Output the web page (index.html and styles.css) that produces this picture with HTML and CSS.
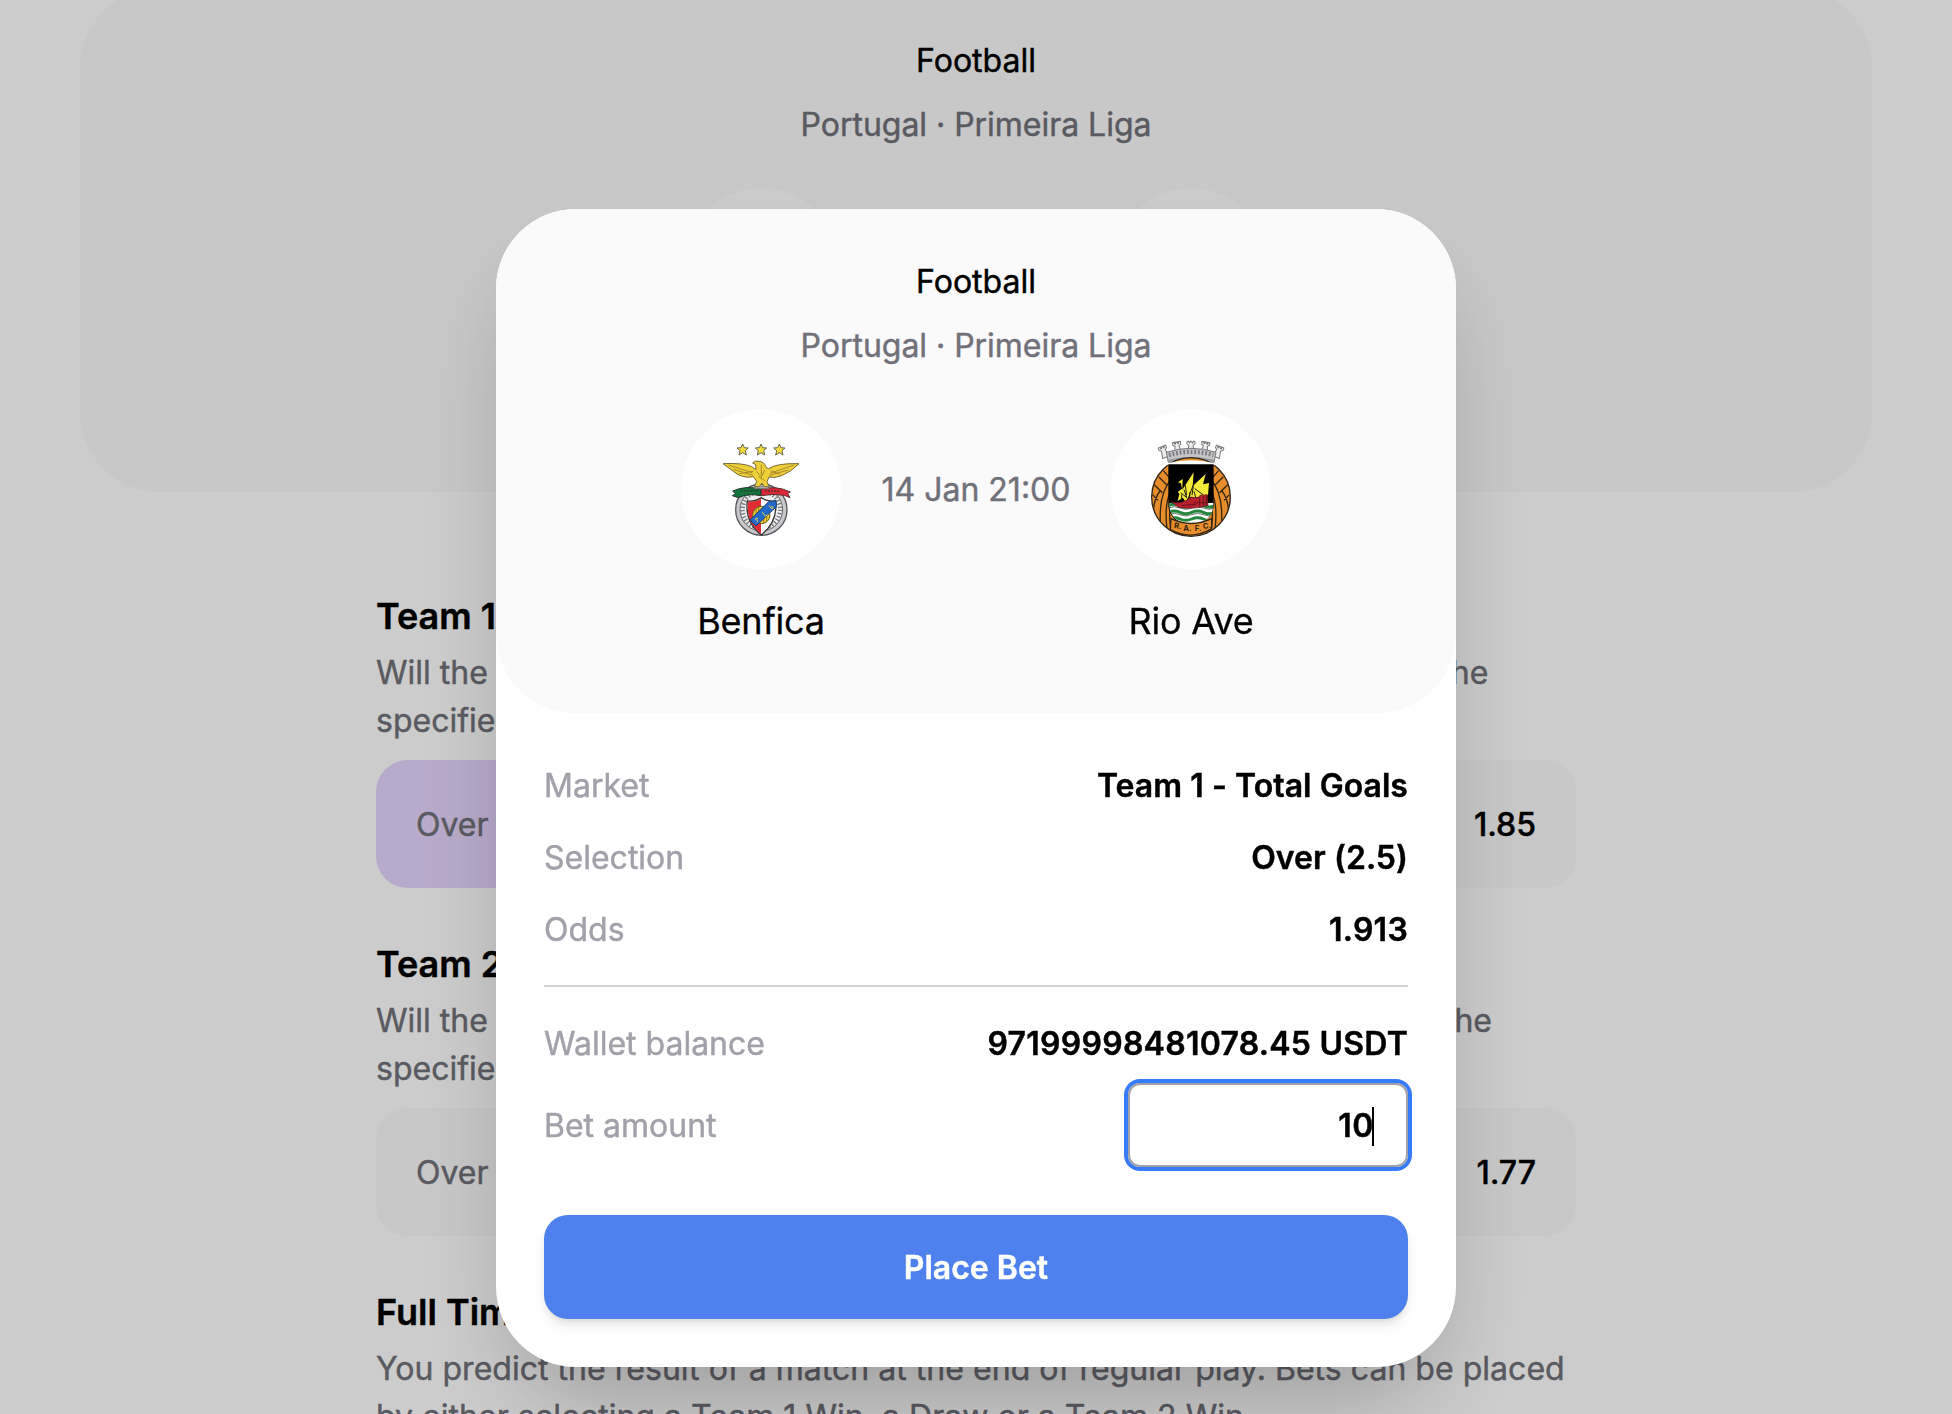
FILE: index.html
```html
<!DOCTYPE html>
<html lang="en">
<head>
<meta charset="utf-8">
<title>Place Bet</title>
<link rel="stylesheet" href="styles.css">
</head>
<body>
<main class="page">
  <header class="game game-page">
    <p class="sport">Football</p>
    <p class="league">Portugal · Primeira Liga</p>
    <div class="teams">
      <div class="team"><span class="crest"></span></div>
      <span class="kickoff"></span>
      <div class="team"><span class="crest"></span></div>
    </div>
  </header>
  <div class="markets">
    <section class="market">
      <h2>Team 1 - Total Goals</h2>
      <p>Will the <span class="rule">combined number of goals scored by Team 1 be over or below</span> the specified line?</p>
      <div class="options"><div class="option selected"><span>Over</span></div><div class="option end"><b>1.85</b></div></div>
    </section>
    <section class="market">
      <h2>Team 2 - Total Goals</h2>
      <p>Will the <span class="rule rule-tight">combined number of goals scored by Team 2 be over or below</span> the specified line?</p>
      <div class="options"><div class="option"><span>Over</span></div><div class="option end"><b>1.77</b></div></div>
    </section>
    <section class="market">
      <h2>Full Time Result</h2>
      <p class="result-note">You predict the result of a match at the end of regular play. Bets can be placed by either selecting a Team 1 Win, a Draw or a Team 2 Win.</p>
    </section>
  </div>
</main>

<div class="overlay">
  <div class="modal" role="dialog">
    <header class="game">
      <p class="sport">Football</p>
      <p class="league">Portugal · Primeira Liga</p>
      <div class="teams">
        <div class="team">
          <span class="crest">
            <svg viewBox="33 27 480 480" aria-hidden="true">
              <defs>
                <path id="star" d="M0-17 5-6 17-5 8 3 11 16 0 9-11 16-8 3-17-5-5-6Z" fill="#f3d93d" stroke="#66644f" stroke-width="3"/>
              </defs>
              <use href="#star" x="218" y="149"/><use href="#star" x="273" y="149"/><use href="#star" x="328" y="149"/>
              <circle cx="274" cy="329" r="77" fill="#c9c9cb" stroke="#55565a" stroke-width="4"/>
              <circle cx="274" cy="329" r="64" fill="#eee" stroke="#66676b" stroke-width="3"/>
              <circle cx="274" cy="329" r="56" fill="none" stroke="#77787c" stroke-width="13" stroke-dasharray="4 6"/>
              <path d="M232 303Q255 306 274 293 292 306 317 303 324 365 274 405 224 365 232 303Z" fill="#fff" stroke="#333" stroke-width="4"/>
              <path d="M234 305Q255 308 273 296V402Q226 365 234 305Z" fill="#e22d36"/>
              <circle cx="274" cy="345" r="26" fill="#e9c936" stroke="#6b5c1e" stroke-width="3"/>
              <path d="M258 326v38M266 321v49M281 321v49M290 327v37" stroke="#997f23" stroke-width="3"/>
              <path d="M240 360 296 305 318 302 319 320 258 378Z" fill="#2369c9" stroke="#163f7c" stroke-width="3"/>
              <path d="M264 356q-10-4-7 3 10 1 4 8M277 336l9 13 7-5M297 317l9 10q8-7-2-7" fill="none" stroke="#e2d34a" stroke-width="3"/>
              <path d="M188 273Q228 255 272 268V287Q235 279 205 293L187 287 197 281Z" fill="#14743c" stroke="#26332a" stroke-width="3"/>
              <path d="M274 268Q318 255 361 276L353 280 360 293 343 286Q309 280 274 287Z" fill="#df2737" stroke="#5b2930" stroke-width="3"/>
              <path d="M214 273 263 272M286 272 332 274" stroke="#25352a" stroke-width="5" stroke-dasharray="4 5"/>
              <path d="M260 258h30l8 8h-46Z" fill="#aaaaa9" stroke="#666" stroke-width="2"/>
              <path d="M248 189Q255 180 267 184 282 185 287 199 291 207 296 206 321 189 387 191 364 215 335 227 314 235 297 231L291 245 297 260H283L276 249 268 260H254L260 244 250 230Q217 237 190 214L159 191Q218 188 245 200L258 209 257 194Z" fill="#efd039" stroke="#776b39" stroke-width="3" stroke-linejoin="round"/>
              <path d="M175 195 247 218M190 208 249 226M208 221 250 214M372 195 300 220M355 210 298 226M331 223 302 212M260 214l12 15M284 210l-12 24M266 230l18 12M274 194v32" fill="none" stroke="#a78a2b" stroke-width="3"/>
            </svg>
          </span>
          <span class="team-name">Benfica</span>
        </div>
        <time class="kickoff">14 Jan 21:00</time>
        <div class="team">
          <span class="crest">
            <svg viewBox="33 27 480 480" aria-hidden="true">
              <defs>
                <path id="tower" d="M-12-12h6v5h3v-5h6v5h3v-5h6v8l-6 4 5 22h-22l5-22-6-4Z" fill="#eee" stroke="#77787a" stroke-width="3"/>
                <clipPath id="disc"><circle cx="273" cy="291" r="117"/></clipPath>
                <clipPath id="sea"><path d="M208 308H340V320Q333 371 274 371 216 371 208 320Z"/></clipPath>
              </defs>
              <use href="#tower" transform="translate(190 151) rotate(-22)"/><use href="#tower" transform="translate(231 138) rotate(-10)"/><use href="#tower" x="273" y="136"/><use href="#tower" transform="translate(316 138) rotate(10)"/><use href="#tower" transform="translate(356 151) rotate(22)"/>
              <path d="M199 157Q273 133 348 157L342 187Q273 171 205 187Z" fill="#c4c4c6" stroke="#77787a" stroke-width="3"/>
              <path d="M207 165Q273 146 340 165" fill="none" stroke="#77787b" stroke-width="13" stroke-dasharray="5 6"/>
              <path d="M203 179Q273 163 344 179L342 192Q273 178 206 192Z" fill="#9b9c9f"/>
              <circle cx="273" cy="291" r="118" fill="#e88d2b" stroke="#302617" stroke-width="4"/>
              <g clip-path="url(#disc)" fill="none" stroke="#332613" stroke-width="4">
                <path d="M212 240Q177 280 181 368M212 273Q192 315 201 386M212 312Q206 345 212 386M160 350Q158 300 182 270M190 212 211 236M176 230 203 257M163 254 187 278M158 284 174 301M334 240Q369 280 365 368M334 273Q354 315 345 386M334 312Q340 345 334 386M386 350Q388 300 364 270M356 212 335 236M370 230 343 257M383 254 359 278M388 284 372 301"/>
              </g>
              <path d="M202 190Q273 172 344 190V196H202Z" fill="#fff"/>
              <path d="M205 193H341V320Q331 374 274 374 215 374 205 320Z" fill="#000"/>
              <g clip-path="url(#sea)">
                <path d="M200 305H345V380H200Z" fill="#fff"/>
                <path d="M205 317q18-8 35 0t35 0 35 0 35 0M205 337q18-8 35 0t35 0 35 0 35 0M205 357q18-8 35 0t35 0 35 0 35 0" fill="none" stroke="#23863b" stroke-width="9"/>
                <path d="M205 324q18-8 35 0t35 0 35 0 35 0M205 344q18-8 35 0t35 0 35 0 35 0" fill="none" stroke="#173520" stroke-width="2"/>
              </g>
              <path d="M247 269 281 217 278 258 317 222 309 253 327 249 324 286 286 293 266 291 256 306 249 293 233 303 238 281 233 276 246 266 243 250 234 247 248 237Z" fill="#f3ea3c"/>
              <path d="M256 256 260 286M281 250 276 286M284 266 309 284M242 278l20 16M269 277v28M245 301v-18M282 274l6 21M252 269l8 24M279 257l-13 35" stroke="#21200a" stroke-width="3"/>
              <path d="M215 306Q246 315 273 291 297 297 300 286L322 284 324 316Q281 330 235 322Z" fill="#b9202e" stroke="#54131a" stroke-width="2"/>
              <path d="M299 292v27M310 288v30M319 287v27M281 308h41M246 316l42-3" stroke="#64131c" stroke-width="3"/>
              <path d="M213 356Q274 385 335 356V386Q274 423 211 389Z" fill="#e88d2b" stroke="#332613" stroke-width="4"/>
              <g class="crest-letters"><text x="221" y="384" transform="rotate(8 221 384)">R.</text><text x="250" y="392">A.</text><text x="284" y="392">F.</text><text x="310" y="387" transform="rotate(-8 310 387)">C.</text></g>
            </svg>
          </span>
          <span class="team-name">Rio Ave</span>
        </div>
      </div>
    </header>
    <div class="slip">
      <dl class="details">
        <div class="row"><dt>Market</dt><dd>Team 1 - Total Goals</dd></div>
        <div class="row"><dt>Selection</dt><dd>Over (2.5)</dd></div>
        <div class="row"><dt>Odds</dt><dd class="figure">1.913</dd></div>
      </dl>
      <dl class="payment">
        <div class="row"><dt>Wallet balance</dt><dd class="figure">97199998481078.45 USDT</dd></div>
        <div class="row"><dt>Bet amount</dt><dd class="amount">10<span class="caret"></span></dd></div>
      </dl>
      <button class="place" type="button">Place Bet</button>
    </div>
  </div>
</div>
</body>
</html>
```
FILE: styles.css
```css
* { box-sizing: border-box; }
body, h2, p, dl, dd { margin: 0; }
body {
  height: 100vh;
  overflow: hidden;
  background: #fff;
  color: #000;
  font: 400 32px/48px Inter, "Liberation Sans", sans-serif;
  -webkit-text-stroke: .45px currentColor;
}
.page { height: 100vh; overflow: hidden; padding: 0 80px; }

.game {
  display: flex;
  flex-direction: column;
  align-items: center;
  height: 504px;
  padding: 49px 0 63px;
  border-radius: 80px;
  background: #fafafa;
}
.game-page { margin-top: -12px; }
.league { margin-top: 16px; color: #71717a; letter-spacing: -.03px; }
.teams { display: flex; gap: 40px; margin-top: 39px; }
.team { display: flex; flex-direction: column; align-items: center; gap: 24px; width: 160px; }
.crest { width: 160px; height: 160px; border-radius: 50%; background: #fff; }
.crest svg { display: block; width: 100%; height: 100%; }
.crest-letters { font: 700 23px Inter, sans-serif; fill: #332613; -webkit-text-stroke: 0; }
.team-name { font-size: 36px; line-height: 56px; letter-spacing: -.2px; white-space: nowrap; -webkit-text-stroke-width: .3px; }
.kickoff { width: 190px; padding-top: 1px; line-height: 160px; text-align: center; white-space: nowrap; color: #71717a; }

.markets { display: flex; flex-direction: column; gap: 48px; width: 1200px; margin: 96px auto 0; }
.market h2 { font-size: 36px; line-height: 56px; font-weight: 600; }
.market p { margin-top: 5px; color: #71717a; }
.market .result-note { letter-spacing: .03px; }
.rule { letter-spacing: -.13px; }
.rule-tight { letter-spacing: -.18px; }
.options { display: grid; grid-template-columns: 1fr 1fr; gap: 16px; margin-top: 15px; }
.option {
  display: flex;
  align-items: center;
  height: 128px;
  padding: 2px 40px 0;
  border-radius: 32px;
  background: #fafafa;
}
.option.end { justify-content: flex-end; }
.option span { color: #71717a; }
.option b { font-weight: 500; }
.option.selected { background: #e7d5fd; }

.overlay {
  position: fixed;
  inset: 0;
  display: flex;
  justify-content: center;
  align-items: flex-start;
  padding-top: 209px;
  background: rgba(0, 0, 0, .2);
}
.modal {
  width: 960px;
  border-radius: 80px;
  background: #fff;
  box-shadow: 0 50px 100px -24px rgba(0, 0, 0, .25);
}
.slip { padding: 49px 48px 48px; }
.details { display: flex; flex-direction: column; gap: 24px; padding-bottom: 31px; border-bottom: 2px solid #d4d4d8; }
.payment { display: flex; flex-direction: column; gap: 15px; padding-top: 33px; }
.row { display: flex; align-items: center; justify-content: space-between; }
.row dt { color: #a1a1aa; }
.row dd { font-weight: 600; letter-spacing: .05px; }
.row .figure { letter-spacing: .25px; }
.payment .row:last-child dt { padding-top: 2px; }
.row .amount {
  display: flex;
  align-items: center;
  justify-content: flex-end;
  width: 280px;
  height: 84px;
  padding: 2px 32px 0 0;
  border: 2px solid #a1a1aa;
  border-radius: 12px;
  letter-spacing: .6px;
  box-shadow: 0 0 0 4px #367bf7;
}
.caret { width: 2px; height: 39px; margin-left: -2px; background: #000; }
.place {
  display: block;
  width: 100%;
  height: 104px;
  margin-top: 48px;
  padding: 2px 0 0;
  border: 0;
  border-radius: 24px;
  background: #4e80ee;
  color: #fff;
  font: inherit;
  font-weight: 600;
  -webkit-text-stroke: .45px #fff;
  box-shadow: 0 8px 12px -2px rgba(0, 0, 0, .1), 0 4px 8px -4px rgba(0, 0, 0, .1);
}
```
